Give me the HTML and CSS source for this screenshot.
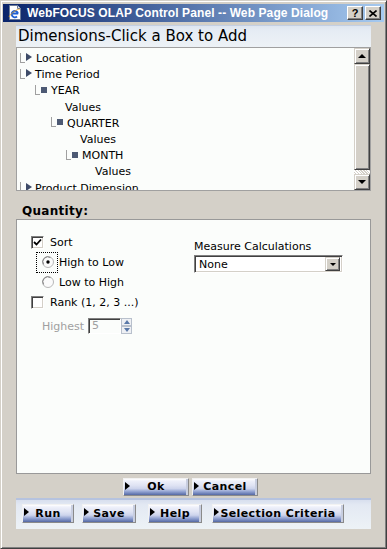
FILE: index.html
```html
<!DOCTYPE html>
<html>
<head>
<meta charset="utf-8">
<link rel="stylesheet" href="styles.css">
</head>
<body>
<div class="window">
  <div class="titlebar">
    <svg class="app-icon" width="15" height="15" viewBox="0 0 15 15">
      <path d="M1.5 0.5h8l3 3v11h-11z" fill="#fff" stroke="#6b7b98"/>
      <path d="M9.5 0.5v3h3" fill="#e4e8f0" stroke="#6b7b98"/>
      <path d="M4 8.5h6.2 M10 8.5a3.2 3.2 0 1 0 -1 3" fill="none" stroke="#1c5fd4" stroke-width="1.8"/>
      <path d="M1 12c2-4 8-8 11-8" fill="none" stroke="#e8a020" stroke-width="0.8"/>
    </svg>
    <span class="title">WebFOCUS OLAP Control Panel -- Web Page Dialog</span>
    <div class="caption-btns">
      <span class="cbtn">?</span>
      <span class="cbtn"><svg width="8" height="7" viewBox="0 0 8 7"><path d="M0.5 0.5l7 6M7.5 0.5l-7 6" stroke="#000" stroke-width="1.6"/></svg></span>
    </div>
  </div>
  <div class="client">
    <div class="dims-head">Dimensions-Click a Box to Add</div>
    <div class="tree">
      <div class="tree-list">
        <div class="row r0"><span class="conn"></span><span class="tri"></span><span class="lbl">Location</span></div>
        <div class="row r0"><span class="conn"></span><span class="tri"></span><span class="lbl lbl-tight">Time Period</span></div>
        <div class="row r1"><span class="conn"></span><span class="sq"></span><span class="lbl">YEAR</span></div>
        <div class="row v1"><span class="lbl">Values</span></div>
        <div class="row r2"><span class="conn"></span><span class="sq"></span><span class="lbl">QUARTER</span></div>
        <div class="row v2"><span class="lbl">Values</span></div>
        <div class="row r3"><span class="conn"></span><span class="sq"></span><span class="lbl">MONTH</span></div>
        <div class="row v3"><span class="lbl">Values</span></div>
        <div class="row r0"><span class="conn"></span><span class="tri"></span><span class="lbl lbl-tight">Product Dimension</span></div>
      </div>
      <div class="scrollbar">
        <span class="sb-btn"><span class="arr-up"></span></span>
        <span class="sb-thumb"></span>
        <span class="sb-track"></span>
        <span class="sb-btn"><span class="arr-dn"></span></span>
      </div>
    </div>
    <div class="qty-label">Quantity:</div>
    <div class="qty-box">
      <div class="qty-left">
        <div class="opt">
          <span class="cb"><svg width="9" height="9" viewBox="0 0 9 9"><path d="M1 4l2.5 2.5L8 1.5" fill="none" stroke="#000" stroke-width="1.8"/></svg></span>
          <span>Sort</span>
        </div>
        <div class="opt radio-row">
          <span class="focus"><span class="rb"><svg width="12" height="12" viewBox="0 0 12 12"><circle cx="6" cy="6" r="5.5" fill="#fbfbfb" stroke="#b8b8b8"/><path d="M1.6 8.5A5 5 0 0 1 8.5 1.6" fill="none" stroke="#808080"/><circle cx="6" cy="6" r="1.7" fill="#000"/></svg></span></span>
          <span class="rtext">High to Low</span>
        </div>
        <div class="opt radio-row">
          <span class="rb plain"><svg width="12" height="12" viewBox="0 0 12 12"><circle cx="6" cy="6" r="5.5" fill="#fbfbfb" stroke="#b8b8b8"/><path d="M1.6 8.5A5 5 0 0 1 8.5 1.6" fill="none" stroke="#808080"/></svg></span>
          <span class="rtext">Low to High</span>
        </div>
        <div class="opt">
          <span class="cb"></span>
          <span>Rank (1, 2, 3 ...)</span>
        </div>
        <div class="opt highest">
          <span class="dim">Highest</span>
          <span class="spin-input">5</span>
          <span class="spinner"><span class="sp-half"><span class="sp-up"></span></span><span class="sp-half"><span class="sp-dn"></span></span></span>
        </div>
      </div>
      <div class="qty-right">
        <div class="mc-label">Measure Calculations</div>
        <div class="select"><span class="sel-text">None</span><span class="sel-btn"><span class="arr-dn"></span></span></div>
      </div>
    </div>
    <div class="okbar">
      <span class="btn btn-ok"><span class="btri"></span><span class="btxt">Ok</span><span class="bsp"></span></span>
      <span class="btn btn-cancel"><span class="btri"></span><span class="btxt">Cancel</span><span class="bsp"></span></span>
    </div>
    <div class="bottombar">
      <span class="btn btn-run"><span class="btri"></span><span class="btxt">Run</span><span class="bsp"></span></span>
      <span class="btn btn-save"><span class="btri"></span><span class="btxt">Save</span><span class="bsp"></span></span>
      <span class="btn btn-help"><span class="btri"></span><span class="btxt">Help</span><span class="bsp"></span></span>
      <span class="btn btn-sel"><span class="btri"></span><span class="btxt">Selection Criteria</span><span class="bsp"></span></span>
    </div>
  </div>
</div>
</body>
</html>
```
FILE: styles.css
```css
html, body {
  margin: 0;
  padding: 0;
  background: #d4d0c8;
}
.window {
  width: 387px;
  height: 549px;
  box-sizing: border-box;
  border: 1px solid;
  border-color: #d4d0c8 #404040 #404040 #d4d0c8;
  box-shadow: inset 1px 1px #ffffff, inset -1px -1px #808080;
  padding: 3px 2px 2px 2px;
  background: #d4d0c8;
  display: flex;
  flex-direction: column;
  font-family: "DejaVu Sans", sans-serif;
  font-size: 11px;
  color: #000;
}
.titlebar {
  height: 18px;
  flex: none;
  display: flex;
  align-items: center;
  background: linear-gradient(to right, #0a246a, #a6caf0);
  padding: 0 3px 0 5px;
}
.app-icon {
  flex: none;
  margin-top: -1px;
}
.title {
  margin-left: 4px;
  color: #fff;
  font-family: "Liberation Sans", Arial, sans-serif;
  font-weight: bold;
  font-size: 12px;
  letter-spacing: 0.1px;
  white-space: nowrap;
  flex: 1;
}
.caption-btns {
  display: flex;
  gap: 2px;
}
.cbtn {
  width: 16px;
  height: 14px;
  box-sizing: border-box;
  background: #d4d0c8;
  border: 1px solid;
  border-color: #ffffff #404040 #404040 #ffffff;
  box-shadow: inset -1px -1px #808080;
  display: flex;
  align-items: center;
  justify-content: center;
  font-family: "Liberation Sans", Arial, sans-serif;
  font-weight: bold;
  font-size: 11px;
  line-height: 1;
}
.client {
  flex: 1;
  display: flex;
  flex-direction: column;
  padding: 3px 13px 0 13px;
}
.dims-head {
  height: 22px;
  box-sizing: border-box;
  background: linear-gradient(to bottom, #c3cfe3 0, #c3cfe3 1px, #dde5f0 1px, #e6ecf4 6px, #edf2f6 100%);
  font-size: 15px;
  line-height: 20px;
  padding: 1px 0 0 2px;
  white-space: nowrap;
}
.tree {
  height: 144px;
  box-sizing: border-box;
  border: 1px solid #a0a0a0;
  background: #fbfdfb;
  display: flex;
  overflow: hidden;
}
.tree-list {
  flex: 1;
  padding-top: 2.5px;
  overflow: hidden;
}
.row {
  height: 16.2px;
  display: flex;
  align-items: center;
  white-space: nowrap;
}
.r0 { padding-left: 3px; }
.r1 { padding-left: 18px; }
.r2 { padding-left: 34px; }
.r3 { padding-left: 49px; }
.v1 { padding-left: 48px; }
.v2 { padding-left: 63px; }
.v3 { padding-left: 78px; }
.conn {
  align-self: flex-start;
  margin-top: 2px;
  width: 4px;
  height: 9px;
  border-left: 1px solid #a0a0a0;
  border-bottom: 1px solid #a0a0a0;
  flex: none;
}
.tri {
  align-self: flex-start;
  margin-top: 2.5px;
  margin-left: 1px;
  width: 0;
  height: 0;
  border-left: 6px solid #3e4b68;
  border-top: 4px solid transparent;
  border-bottom: 4px solid transparent;
  flex: none;
}
.sq {
  align-self: flex-start;
  margin-top: 4px;
  margin-left: 1px;
  width: 6px;
  height: 6px;
  background: #4d5a74;
  flex: none;
}
.lbl {
  margin-left: 4px;
}
.lbl-tight {
  margin-left: 3px;
}
.v1 .lbl, .v2 .lbl, .v3 .lbl {
  margin-left: 0;
}
.scrollbar {
  width: 16px;
  flex: none;
  display: flex;
  flex-direction: column;
  background: #eceae4;
}
.sb-btn, .sb-thumb {
  box-sizing: border-box;
  background: #d4d0c8;
  border: 1px solid;
  border-color: #d4d0c8 #404040 #404040 #d4d0c8;
  box-shadow: inset 1px 1px #ffffff, inset -1px -1px #808080;
}
.sb-btn {
  height: 16px;
  flex: none;
  display: flex;
  align-items: center;
  justify-content: center;
}
.sb-thumb {
  height: 106px;
  flex: none;
}
.sb-track {
  flex: 1;
  background-image: repeating-linear-gradient(45deg, #ffffff 0 1px, #d4d0c8 1px 2px);
}
.arr-up {
  width: 0;
  height: 0;
  border-left: 4px solid transparent;
  border-right: 4px solid transparent;
  border-bottom: 4px solid #000;
}
.arr-dn {
  width: 0;
  height: 0;
  border-left: 4px solid transparent;
  border-right: 4px solid transparent;
  border-top: 4px solid #000;
}
.qty-label {
  height: 28px;
  box-sizing: border-box;
  font-weight: bold;
  font-size: 12px;
  padding: 13px 0 0 6px;
  line-height: 14px;
  letter-spacing: 0.3px;
}
.qty-box {
  height: 255px;
  box-sizing: border-box;
  border: 1px solid #999999;
  background: #fbfdfb;
  display: grid;
  grid-template-columns: 163px 1fr;
  padding: 12px 0 0 14px;
  align-items: start;
}
.qty-left {
  display: flex;
  flex-direction: column;
}
.opt {
  height: 20px;
  display: flex;
  align-items: center;
  white-space: nowrap;
}
.cb {
  width: 13px;
  height: 13px;
  box-sizing: border-box;
  border: 1px solid;
  border-color: #808080 #ffffff #ffffff #808080;
  box-shadow: inset 1px 1px #404040, inset -1px -1px #d4d0c8;
  background: #fff;
  margin-right: 6px;
  display: flex;
  align-items: center;
  justify-content: center;
  flex: none;
}
.radio-row {
  padding-left: 5px;
}
.focus {
  display: flex;
  align-items: center;
  height: 21px;
  box-sizing: border-box;
  border: 1px dotted #000;
  padding: 0 3px 0 5px;
  margin-right: 1px;
}
.rb {
  width: 12px;
  height: 12px;
  display: flex;
  flex: none;
}
.rb.plain {
  margin-left: 6px;
  margin-right: 5px;
}
.highest {
  height: 24px;
  margin-top: 2px;
  padding-left: 11px;
}
.dim {
  color: #a0a0a0;
}
.spin-input {
  margin-left: 4px;
  width: 33px;
  height: 16px;
  box-sizing: border-box;
  border: 1px solid;
  border-color: #808080 #ffffff #ffffff #808080;
  box-shadow: inset 1px 1px #404040;
  background: #fbfdfb;
  color: #a0a0a0;
  padding-left: 3px;
  line-height: 14px;
}
.spinner {
  width: 11px;
  height: 16px;
  display: flex;
  flex-direction: column;
}
.sp-half {
  flex: 1;
  box-sizing: border-box;
  border: 1px solid #b8c0cc;
  background: #eef0f4;
  display: flex;
  align-items: center;
  justify-content: center;
}
.sp-up {
  width: 0;
  height: 0;
  border-left: 3px solid transparent;
  border-right: 3px solid transparent;
  border-bottom: 4px solid #5a78a8;
}
.sp-dn {
  width: 0;
  height: 0;
  border-left: 3px solid transparent;
  border-right: 3px solid transparent;
  border-top: 4px solid #5a78a8;
}
.qty-right {
  padding-top: 7px;
}
.mc-label {
  height: 16px;
  line-height: 16px;
  white-space: nowrap;
}
.select {
  width: 149px;
  height: 18px;
  box-sizing: border-box;
  border: 1px solid;
  border-color: #808080 #ffffff #ffffff #808080;
  box-shadow: inset 1px 1px #404040, inset -1px -1px #d4d0c8;
  background: #fff;
  display: flex;
  align-items: center;
  padding: 0 2px 0 4px;
}
.sel-text {
  flex: 1;
  font-size: 11px;
}
.sel-btn {
  width: 15px;
  height: 14px;
  box-sizing: border-box;
  background: #d4d0c8;
  border: 1px solid;
  border-color: #d4d0c8 #404040 #404040 #d4d0c8;
  box-shadow: inset 1px 1px #ffffff, inset -1px -1px #808080;
  display: flex;
  align-items: center;
  justify-content: center;
}
.sel-btn .arr-dn {
  border-left-width: 3px;
  border-right-width: 3px;
  border-top-width: 3px;
}
.okbar {
  height: 24px;
  box-sizing: border-box;
  padding: 4px 0 0 107px;
  display: flex;
  gap: 3px;
}
.bottombar {
  height: 31px;
  box-sizing: border-box;
  background: linear-gradient(to bottom, #b6c3df 0, #b6c3df 2px, #d8dfee 2px, #e3e9f3 7px, #edf2f6 100%);
  padding: 6px 0 0 6px;
  display: flex;
}
.btn {
  box-sizing: border-box;
  height: 18px;
  display: flex;
  align-items: center;
  border: 1px solid;
  border-color: #f2f2f2 #8a8a8a #8a8a8a #f2f2f2;
  box-shadow: inset -2px 0 #c8cee0;
  background: linear-gradient(to bottom, #ffffff 0%, #eef0fa 12%, #dfe3f3 40%, #cdd4ec 60%, #8e9fcf 80%, #5468a4 100%);
  font-weight: bold;
  font-size: 11px;
  letter-spacing: 0.4px;
  white-space: nowrap;
}
.bottombar .btn {
  height: 19px;
}
.btri {
  flex: none;
  width: 0;
  height: 0;
  margin-left: 1px;
  margin-top: -3px;
  border-left: 5px solid #000;
  border-top: 4px solid transparent;
  border-bottom: 4px solid transparent;
}
.btxt {
  flex: 1;
  text-align: center;
  margin-top: -1px;
}
.bsp {
  width: 6px;
  flex: none;
}
.btn-ok { width: 66px; }
.btn-cancel { width: 66px; }
.btn-run { width: 52px; }
.btn-save { width: 54px; margin-left: 8px; }
.btn-help { width: 54px; margin-left: 12px; }
.btn-sel { width: 132px; margin-left: 10px; }
```
